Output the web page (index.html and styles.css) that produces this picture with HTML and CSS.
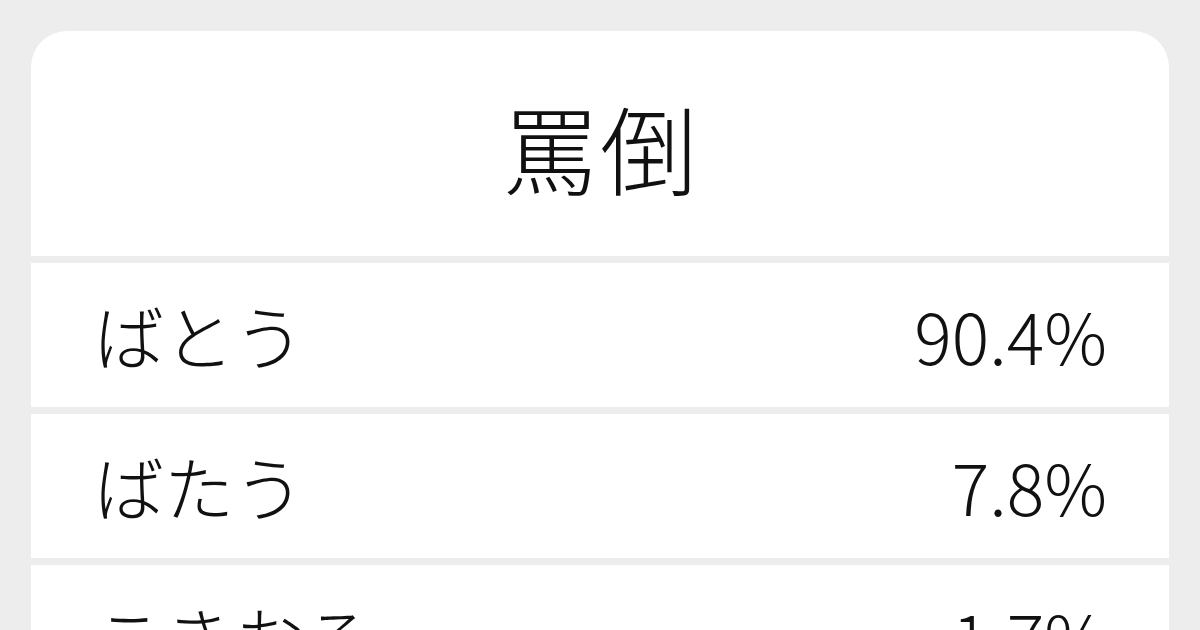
FILE: index.html
```html
<!DOCTYPE html>
<html lang="ja">
<head>
<meta charset="utf-8">
<link rel="stylesheet" href="styles.css">
</head>
<body>
<div class="card">
  <div class="head"><h1 class="title">罵倒</h1></div>
  <div class="row"><span class="reading">ばとう</span><span class="pct">90.4%</span></div>
  <div class="row"><span class="reading">ばたう</span><span class="pct">7.8%</span></div>
  <div class="row"><span class="reading">こきおろ</span><span class="pct">1.7%</span></div>
</div>
</body>
</html>
```
FILE: styles.css
```css
html, body {
  margin: 0;
  padding: 0;
  background: #ededed;
  overflow: hidden;
}
body {
  padding: 31px 31px 0 31px;
  font-family: "Noto Sans CJK JP", "Noto Sans", sans-serif;
  color: #111;
  height: 630px;
  box-sizing: border-box;
}
.card {
  width: 1138px;
  border-radius: 36px 36px 0 0;
  overflow: hidden;
  display: flex;
  flex-direction: column;
  gap: 7px;
  background: #ededed;
}
.head {
  background: #fff;
  height: 225px;
  display: flex;
  align-items: center;
  justify-content: center;
}
.title {
  margin: 3px 0 0 0;
  font-size: 97px;
  font-weight: 300;
  line-height: 1;
}
.row {
  background: #fff;
  height: 144px;
  flex: none;
  display: flex;
  align-items: center;
  justify-content: space-between;
  padding: 0 62px 0 63px;
  font-size: 70px;
  font-weight: 300;
  line-height: 1;
}
```
